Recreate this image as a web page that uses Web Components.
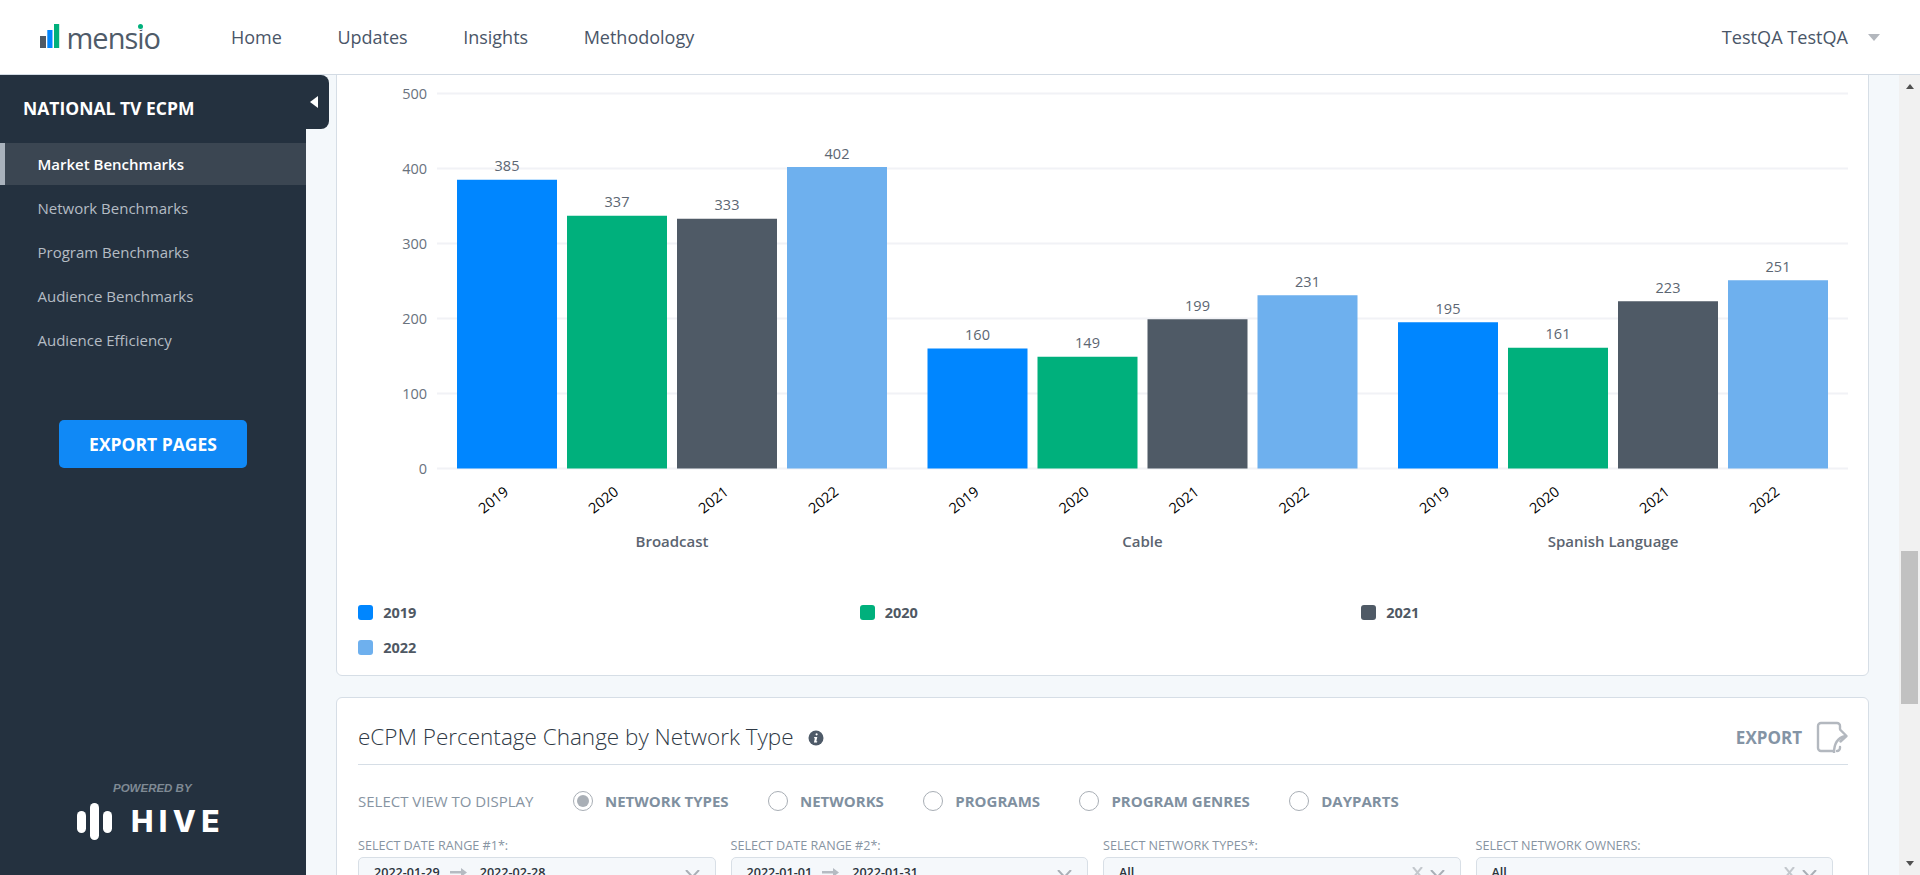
<!DOCTYPE html>
<html lang="en">
<head>
<meta charset="utf-8">
<title>Mensio</title>
<style>
html,body{margin:0;height:100%;overflow:hidden;font-family:"Open Sans","Liberation Sans",sans-serif;}
</style>
</head>
<body>
<mensio-app>
  <mensio-header slot="header"></mensio-header>
  <side-nav slot="side" heading="NATIONAL TV ECPM">
    <nav-item active>Market Benchmarks</nav-item>
    <nav-item>Network Benchmarks</nav-item>
    <nav-item>Program Benchmarks</nav-item>
    <nav-item>Audience Benchmarks</nav-item>
    <nav-item>Audience Efficiency</nav-item>
  </side-nav>
  <panel-card clipped>
    <bar-chart></bar-chart>
    <chart-legend></chart-legend>
  </panel-card>
  <panel-card second>
    <panel-head>eCPM Percentage Change by Network Type</panel-head>
    <view-picker></view-picker>
    <filter-grid>
      <filter-field label="SELECT DATE RANGE #1*:" from="2022-01-29" to="2022-02-28"></filter-field>
      <filter-field label="SELECT DATE RANGE #2*:" from="2022-01-01" to="2022-01-31"></filter-field>
      <filter-field label="SELECT NETWORK TYPES*:" value="All"></filter-field>
      <filter-field label="SELECT NETWORK OWNERS:" value="All"></filter-field>
    </filter-grid>
  </panel-card>
</mensio-app>
<script>
function comp(name, css, html){
  customElements.define(name, class extends HTMLElement{
    constructor(){super();this.attachShadow({mode:'open'});}
    connectedCallback(){
      const a = n => this.getAttribute(n);
      this.shadowRoot.innerHTML = '<style>'+css+'</style>'+(typeof html==='function'?html(a,this):html);
    }
  });
}
comp('mensio-app',`
:host{display:flex;flex-direction:column;height:875px;overflow:hidden;}
.row{display:flex;flex:1;min-height:0;}
main{flex:1;min-width:0;background:#f4f8fb;overflow:hidden;padding:0 30px;}
`,`<slot name="header"></slot>
<div class="row"><slot name="side"></slot><main><slot></slot></main><fake-scrollbar></fake-scrollbar></div>`);

comp('mensio-header',`
:host{display:flex;align-items:center;height:74px;background:#fff;border-bottom:1px solid #d3dbe4;flex:none;color:#4a5668;font-size:18px;}
.logo{display:flex;align-items:flex-start;width:191px;margin-left:40px;position:relative;height:74px;flex:none;}
.logo svg{margin-top:24px;display:block;flex:none;}
.word{font-size:29px;line-height:40px;color:#4f5b69;margin:17.5px 0 0 6.5px;letter-spacing:-1px;}
.dot{position:absolute;left:98.300px;top:24.200px;width:5px;height:5px;border-radius:50%;background:#00b07c;box-shadow:0 0 0 1px #fff;}
nav{display:flex;gap:55.5px;}
.user{margin-left:auto;font-size:18.1px;}
.car{margin:0 40px 0 20px;width:0;height:0;border:6px solid transparent;border-top:7px solid #b3b7bd;border-bottom:0;}
`,`<div class="logo"><svg width="20" height="24" viewBox="0 0 20 24"><rect x="0" y="12" width="6" height="12" fill="#4f5a66"/><rect x="7.3" y="6" width="5.2" height="18" fill="#0086ff"/><rect x="14" y="0" width="5.2" height="24" fill="#00b07c"/></svg><span class="word">mensio</span><span class="dot"></span></div>
<nav><span>Home</span><span>Updates</span><span>Insights</span><span>Methodology</span></nav>
<span class="user">TestQA TestQA</span><span class="car"></span>`);

comp('side-nav',`
:host{display:flex;flex-direction:column;width:306px;flex:none;background:#24313f;position:relative;color:#fff;}
.tab{position:absolute;left:0;top:0;width:329px;height:54px;background:#24313f;border-radius:0 8px 8px 0;z-index:2;}
.tri{position:absolute;left:310px;top:21px;width:0;height:0;border:6.5px solid transparent;border-right:8px solid #fff;border-left:0;}
h1{position:relative;z-index:3;margin:0;height:68px;box-sizing:border-box;padding:21px 0 0 23px;font-size:17.5px;line-height:24px;font-weight:700;}
.list{display:flex;flex-direction:column;gap:2px;}
.btn{margin:59px 0 0 59px;width:188px;height:48px;background:#1089f6;border-radius:5px;display:flex;align-items:center;justify-content:center;font-size:17.5px;font-weight:700;color:#fff;}
.foot{margin-top:auto;padding:0 0 35px 77px;}
.pw{margin-left:36px;font:italic 700 11.5px "Liberation Sans",sans-serif;line-height:14px;color:#7f8a94;}
.hive{display:flex;align-items:center;margin-top:8px;height:37px;}
.hive b{margin-left:18px;font:800 30px/37px Inter,"Liberation Sans",sans-serif;letter-spacing:5.400px;color:#fff;}
`,a=>`<div class="tab"><span class="tri"></span></div><h1>${a('heading')}</h1>
<div class="list"><slot></slot></div>
<div class="btn">EXPORT PAGES</div>
<div class="foot"><div class="pw">POWERED BY</div><div class="hive"><svg width="36" height="37" viewBox="0 0 36 37"><rect x="0" y="8" width="9" height="22" rx="4.5" fill="#fff"/><rect x="13" y="0" width="9" height="37" rx="4.5" fill="#fff"/><rect x="26" y="8" width="9" height="22" rx="4.5" fill="#fff"/></svg><b>HIVE</b></div></div>`);

comp('nav-item',`
:host{display:flex;align-items:center;height:42px;box-sizing:border-box;padding-left:37.5px;font-size:15px;color:#b4bcc4;}
:host([active]){background:#3b4652;border-left:5px solid #a9b2bc;padding-left:32.5px;font-weight:600;color:#fff;}
`,`<slot></slot>`);

comp('panel-card',`
:host{display:block;background:#fff;border:1px solid #d6dee6;border-radius:6px;box-sizing:border-box;}
:host([clipped]){margin-top:-20px;padding-bottom:10px;}
:host([second]){margin-top:21px;padding:0 20px 0 21px;}
`,`<slot></slot>`);

const DATA=[['Broadcast',[385,337,333,402]],['Cable',[160,149,199,231]],['Spanish Language',[195,161,223,251]]];
const COL=['#0086ff','#00b07c','#4f5a66','#6eb0ee'],YRS=[2019,2020,2021,2022];
comp('bar-chart',`
:host{display:block;height:539px;}
svg{display:block;font-family:"Open Sans",sans-serif;}
`,()=>{
  let s='';
  for(let v=0;v<=500;v+=100){
    const y=468.5-v*.75;
    s+=`<rect x="437" y="${y-1}" width="1411" height="2" fill="#f1f2f6"/>`;
    s+=`<text x="427" y="${y+5}" text-anchor="end" font-size="14.5" fill="#69727d">${v}</text>`;
  }
  DATA.forEach((g,gi)=>{
    const gx=457+gi*470.5;
    g[1].forEach((v,i)=>{
      const x=gx+i*110,h=v*.75,t=468.5-h,c=x+50;
      s+=`<rect x="${x}" y="${t}" width="100" height="${h}" fill="${COL[i]}"/>`;
      s+=`<text x="${c}" y="${t-8.5}" text-anchor="middle" font-size="14.5" fill="#5c6672">${v}</text>`;
      s+=`<text x="0" y="0" transform="translate(${c-13.5} 500) rotate(-38)" dy="5" text-anchor="middle" font-size="14.5" fill="#000">${YRS[i]}</text>`;
    });
    s+=`<text x="${gx+215}" y="546.5" text-anchor="middle" font-size="15" font-weight="600" fill="#5b6470">${g[0]}</text>`;
  });
  return `<svg width="1531" height="539" viewBox="337 56 1531 539">${s}</svg>`;
});

comp('chart-legend',`
:host{display:grid;grid-template-columns:repeat(3,501.5px);grid-auto-rows:35px;padding-left:21px;font-size:14.5px;font-weight:700;color:#4f5863;}
div{display:flex;align-items:center;gap:10.2px;}
i{width:15px;height:15px;border-radius:3px;display:block;}
`,YRS.map((y,i)=>`<div><i style="background:${COL[i]}"></i>${y}</div>`).join(''));

comp('panel-head',`
:host{display:flex;align-items:center;height:54px;padding-top:12px;border-bottom:1px solid #d6dee6;}
h2{margin:0;font-size:22.5px;font-weight:300;color:#2f3a46;line-height:30px;}
.i{margin-left:14px;margin-top:2px;display:block;}
.ex{margin-left:auto;font-size:17px;font-weight:700;color:#8494a5;}
.ic{margin-left:14px;display:block;margin-top:-1px;}
`,`<h2><slot></slot></h2>
<svg class="i" width="16" height="16" viewBox="0 0 16 16"><circle cx="8" cy="8" r="7.5" fill="#4e5a68"/><path d="M8.6 3.2a1.1 1.1 0 1 1-.01 0zM6.3 7h3l-1 4.2h1l-.3 1.2H5.9l1-4.2H6z" fill="#fff"/></svg>
<span class="ex">EXPORT</span>
<svg class="ic" width="32" height="32" viewBox="0 0 32 32" fill="none" stroke="#b3b8bf" stroke-width="2.4" stroke-linecap="round" stroke-linejoin="round"><path d="M24 8V5a3 3 0 0 0-3-3H5a3 3 0 0 0-3 3v22a3 3 0 0 0 3 3h12M24 26v1a3 3 0 0 1-3 3"/><path d="M18 32c0-9 3-15 11-17M24.500 9l6 6-6 5.500"/></svg>`);

comp('view-picker',`
:host{display:flex;align-items:center;height:20px;margin-top:26px;color:#8794a2;}
.t{font-size:15px;width:215px;flex:none;white-space:nowrap;}
.o{display:flex;align-items:center;gap:12px;margin-right:39.400px;font-size:15px;font-weight:700;color:#8090a0;white-space:nowrap;}
.r{width:20px;height:20px;box-sizing:border-box;border:1px solid #a8aeb5;border-radius:50%;display:flex;align-items:center;justify-content:center;flex:none;}
.on::after{content:"";width:12px;height:12px;border-radius:50%;background:#a9afb6;}
`,`<span class="t">SELECT VIEW TO DISPLAY</span>`+['NETWORK TYPES','NETWORKS','PROGRAMS','PROGRAM GENRES','DAYPARTS'].map((l,i)=>`<span class="o"><span class="r ${i?'':'on'}"></span>${l}</span>`).join(''));

comp('filter-grid',`
:host{display:grid;grid-template-columns:repeat(4,1fr);gap:15px;margin-top:26px;padding-right:15px;}
`,`<slot></slot>`);

comp('filter-field',`
:host{display:block;min-width:0;}
.l{font-size:12.6px;line-height:18px;height:20px;color:#8794a2;white-space:nowrap;}
.b{display:flex;align-items:center;height:30px;box-sizing:border-box;border:1px solid #d8dfe6;border-radius:5px;background:#f5f8fb;padding:0 15px 0 15px;font-size:12.6px;font-weight:600;color:#2c343d;}
.a{margin:0 13px 0 10px;display:block;}
.x{margin-left:auto;display:block;}
.c{display:block;margin-left:auto;margin-top:3px;}
.x + .c{margin-left:7px;}
`,a=>{
  const chev='<svg class="c" width="15" height="8" viewBox="0 0 15 8" fill="none" stroke="#a9afb6" stroke-width="2"><path d="M1 0l6.500 7L14 0"/></svg>';
  const x='<svg class="x" width="11" height="11" viewBox="0 0 11 11" fill="none" stroke="#c3c8cd" stroke-width="2"><path d="M1 0l9 11M10 0L1 11"/></svg>';
  const arrow='<svg class="a" width="17" height="9" viewBox="0 0 17 9" fill="#b5bbc2"><path d="M0 3h11V0l6 4.500-6 4.500V5.500H0z"/></svg>';
  const inner=a('from')?`<span>${a('from')}</span>${arrow}<span>${a('to')}</span>${chev}`:`<span>${a('value')}</span>${x}${chev}`;
  return `<div class="l">${a('label')}</div><div class="b">${inner}</div>`;
});

comp('fake-scrollbar',`
:host{display:flex;flex-direction:column;align-items:center;width:21px;flex:none;background:#f1f1f1;}
.u,.d{width:0;height:0;border:4.500px solid transparent;}
.u{margin-top:9px;border-bottom:5px solid #505050;border-top:0;}
.d{margin-bottom:9px;margin-top:auto;border-top:5px solid #505050;border-bottom:0;}
.t{margin-top:462px;width:17px;height:153px;background:#c1c1c1;}
`,`<span class="u"></span><span class="t"></span><span class="d"></span>`);
</script>
</body>
</html>
